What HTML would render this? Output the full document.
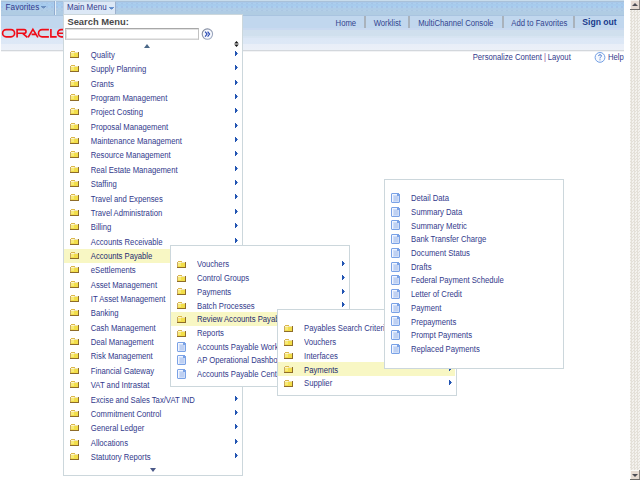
<!DOCTYPE html><html><head><meta charset="utf-8"><style>
*{margin:0;padding:0;box-sizing:border-box}
html,body{width:640px;height:480px;overflow:hidden;background:#fff}
body{position:relative;font-family:"Liberation Sans",sans-serif;font-size:8px;line-height:1}
div,svg{position:absolute}
.t{white-space:nowrap;color:#333a8c;font-size:7.7px;line-height:7.7px;transform:scaleY(1.145);transform-origin:0 0}
.hl{color:#1e2c70}
.mm{font-size:8px}
.fav{font-size:8.2px}
.pipe{color:#8c4c9c}
.hd{color:#32448e}
.so{font-weight:bold;color:#1a3a8c;transform:none;font-size:8.6px}
.ic{display:block}
.ar{width:0;height:0;border-left:3px solid #1f4fae;border-top:2.5px solid transparent;border-bottom:2.5px solid transparent}
.panel{background:#fff;border:1px solid #ccd7dc;overflow:hidden}
.hi{background:#f8f7c4}
</style></head><body>

<div style="left:1px;top:0;width:623px;height:52px;background:linear-gradient(#c8dcec 0,#c8dcec 1px,#a9c1d9 1px,#a9c1d9 2px,#a8c8ea 2px,#a6ccee 6px,#b0cce6 9px,#b0cce2 15px,#a9c4e0 15px,#a9c4e0 16px,#c1d7ee 16px,#c1d7ee 28px,#c8d9f0 28px,#c9d9f0 30px,#d0dfee 30px,#d0e0ee 36px,#d6e3f1 36px,#d7e4f2 38px,#dce7f6 38px,#dde8f6 44px,#e8eef8 44px,#ebf0f8 50px,#d3d7dc 50px,#d3d7dc 51px,#f2f3f5 51px,#f2f3f5 52px)"></div>
<svg style="left:1px;top:0" width="623" height="16" shape-rendering="crispEdges"><defs><pattern id="dp" width="5" height="16" patternUnits="userSpaceOnUse"><rect x="0" y="3" width="2" height="1" fill="#9cb6dc" opacity="0.25"/><rect x="2" y="3" width="3" height="1" fill="#c0dcf4" opacity="0.25"/><rect x="0" y="6" width="2" height="2" fill="#a0b0e4" opacity="0.3"/><rect x="2" y="6" width="3" height="2" fill="#b0d8f8" opacity="0.25"/><rect x="0" y="10" width="2" height="1" fill="#9cb4d8" opacity="0.25"/><rect x="2" y="10" width="3" height="1" fill="#bcd8f0" opacity="0.25"/></pattern></defs><rect width="623" height="16" fill="url(#dp)"/></svg>
<div class="t fav" style="left:5.6px;top:3.15px">Favorites</div>
<svg style="left:41px;top:6px" width="5" height="3" shape-rendering="crispEdges"><rect x="0" y="0" width="5" height="1" fill="#6c90c0"/><rect x="1" y="1" width="3" height="1" fill="#6c90c0"/><rect x="2" y="2" width="1" height="1" fill="#90acd4"/></svg>
<div style="left:54px;top:1px;width:1px;height:14px;background:#90acd0"></div>
<div style="left:55px;top:1px;width:1px;height:14px;background:#e4eef8"></div>
<svg style="left:0;top:0" width="64" height="50" viewBox="0 0 64 50"><g fill="none" stroke="#f00c18" stroke-width="1.65" stroke-linecap="butt"><rect x="2.6" y="29.6" width="12" height="7.2" rx="3.6" ry="3.6"/><path d="M17.1 37.4V29.6H24.2A1.8 1.8 0 0 1 24.2 33.2H17.1M22.4 33.2L27.4 37.4"/><path d="M28.1 37.4L32.9 29.4L37.9 37.4M31.6 34.4H35.9"/><path d="M48.9 29.6H42.1A3.6 3.6 0 0 0 42.1 36.8H48.9"/><path d="M50.9 29V36.8H56.7"/><path d="M65 29.6H61.3A3.6 3.6 0 0 0 61.3 36.8H65M58.2 33.2H65"/></g></svg>
<div class="t hd" style="left:335.6px;top:19.05px">Home</div>
<div class="t hd" style="left:373.7px;top:19.05px">Worklist</div>
<div class="t hd" style="left:418.2px;top:19.05px">MultiChannel Console</div>
<div class="t hd" style="left:511.3px;top:19.05px">Add to Favorites</div>
<div class="t so" style="left:582.3px;top:18.55px">Sign out</div>
<div style="left:364px;top:16px;width:2px;height:12px;background:#a9b2bc"></div>
<div style="left:408px;top:16px;width:2px;height:12px;background:#a9b2bc"></div>
<div style="left:502px;top:16px;width:2px;height:12px;background:#a9b2bc"></div>
<div style="left:573px;top:16px;width:2px;height:12px;background:#a9b2bc"></div>
<div class="t pc" style="left:472.7px;top:53.05px">Personalize Content</div>
<div class="t pipe" style="left:544px;top:53.05px">|</div>
<div class="t pc" style="left:547.7px;top:53.05px">Layout</div>
<svg style="left:594px;top:51px" width="12" height="13" viewBox="0 0 12 13"><circle cx="6" cy="6.4" r="4.9" fill="#f6f9fe" stroke="#6c9ae2" stroke-width="0.95"/><path d="M4.6 5.1Q4.6 3.7 6 3.7Q7.4 3.7 7.4 5Q7.4 5.7 6.5 6.2Q6 6.5 6 7.4" fill="none" stroke="#4a7ad0" stroke-width="0.95"/><rect x="5.5" y="8.3" width="1" height="1" fill="#4a7ad0"/></svg>
<div class="t pc" style="left:608px;top:53.05px">Help</div>
<div style="left:630px;top:0;width:10px;height:480px;background-color:#f2f0ec;background-image:repeating-conic-gradient(#e4e0d8 0 25%, #f4f2ee 0 50%);background-size:3px 3px"></div>
<svg style="left:630px;top:0" width="10" height="10" shape-rendering="crispEdges"><rect width="10" height="10" fill="#e6dad2"/><rect width="10" height="1" fill="#f4f0ec"/><rect width="1" height="10" fill="#f8f6f4"/><rect x="9" width="1" height="10" fill="#8a8480"/><rect y="9" width="10" height="1" fill="#6c6a68"/><path d="M2 6h6L5 3z" fill="#4c4c54" shape-rendering="auto"/></svg>
<svg style="left:630px;top:470px" width="10" height="10" shape-rendering="crispEdges"><rect width="10" height="10" fill="#e6dad2"/><rect width="10" height="1" fill="#fbfaf8"/><rect width="1" height="10" fill="#f8f6f4"/><rect x="9" width="1" height="10" fill="#8a8480"/><rect y="9" width="10" height="1" fill="#6c6a68"/><path d="M2 4h6L5 7z" fill="#4c4c54" shape-rendering="auto"/></svg>
<div style="left:63px;top:1px;width:53px;height:14px;background:#dce8f6;border:1px solid #c0d0e2;border-right-color:#9cb0cc;border-bottom:none"></div>
<div class="t mm" style="left:67px;top:3.15px">Main Menu</div>
<svg style="left:109px;top:7px" width="5" height="3" shape-rendering="crispEdges"><rect x="0" y="0" width="5" height="1" fill="#6a94d0"/><rect x="1" y="1" width="3" height="1" fill="#5c88c8"/><rect x="2" y="2" width="1" height="1" fill="#9ab8e0"/></svg>
<div class="panel" style="left:63px;top:14px;width:180px;height:462px"></div>
<div class="t sm" style="left:67.4px;top:17.2px;font-weight:bold;font-size:9.4px;line-height:9.4px;transform:scaleY(1.06);color:#4a4a4a">Search Menu:</div>
<div style="left:65px;top:28px;width:134px;height:12px;border:1px solid #c2c2c2;border-top-color:#a8a8a8;border-bottom-color:#d2d2d2;background:#fff;box-shadow:inset 1px 1px 0 #e2e2e2, inset 0 -1px 0 #e8e8e8"></div>
<svg style="left:201px;top:28px" width="13" height="13" viewBox="0 0 13 13"><defs><linearGradient id="gr" x1="0" y1="0" x2="1" y2="1"><stop offset="0" stop-color="#7c8498"/><stop offset="1" stop-color="#a8b4cc"/></linearGradient></defs><circle cx="6.4" cy="6.1" r="5.2" fill="#f6f8fd" stroke="url(#gr)" stroke-width="1.1"/><path d="M4.1 3.6L6.1 6.1L4.1 8.6M6.6 3.6L8.6 6.1L6.6 8.6" fill="none" stroke="#2c4cb4" stroke-width="1.15"/></svg>
<div style="left:144px;top:44px;width:0;height:0;border-bottom:4px solid #4a6888;border-left:3.5px solid transparent;border-right:3.5px solid transparent"></div>
<div style="left:150px;top:468px;width:0;height:0;border-top:4px solid #4a5888;border-left:3.2px solid transparent;border-right:3.2px solid transparent"></div>
<svg style="left:233.5px;top:41px" width="5" height="6" viewBox="0 0 5 6"><path d="M2.5 0L4.8 2.4H0.2z M2.5 6L4.8 3.6H0.2z" fill="#181818"/></svg>
<svg class="ic" style="left:70px;top:51px" width="9" height="7" viewBox="0 0 9 7" shape-rendering="crispEdges"><rect x="1" y="0" width="4" height="1" fill="#dcb84c"/><rect x="0" y="1" width="9" height="6" fill="#f2de4a"/><rect x="1" y="1" width="3" height="1" fill="#fff6c8"/><rect x="4" y="1" width="4" height="1" fill="#efe2b0"/><rect x="1" y="2" width="3" height="3" fill="#f8ea78"/><rect x="0" y="1" width="1" height="6" fill="#c9a862"/><rect x="8" y="1" width="1" height="6" fill="#8e6c2a"/><rect x="0" y="6" width="9" height="1" fill="#8e6c2a"/></svg>
<div class="t" style="left:90.8px;top:50.90px">Quality</div>
<svg class="ic" style="left:235px;top:51px" width="3" height="5" shape-rendering="crispEdges"><rect x="0" y="0" width="1" height="5" fill="#2254b2"/><rect x="1" y="1" width="1" height="3" fill="#2254b2"/><rect x="2" y="2" width="1" height="1" fill="#5c86cc"/></svg>
<svg class="ic" style="left:70px;top:65px" width="9" height="7" viewBox="0 0 9 7" shape-rendering="crispEdges"><rect x="1" y="0" width="4" height="1" fill="#dcb84c"/><rect x="0" y="1" width="9" height="6" fill="#f2de4a"/><rect x="1" y="1" width="3" height="1" fill="#fff6c8"/><rect x="4" y="1" width="4" height="1" fill="#efe2b0"/><rect x="1" y="2" width="3" height="3" fill="#f8ea78"/><rect x="0" y="1" width="1" height="6" fill="#c9a862"/><rect x="8" y="1" width="1" height="6" fill="#8e6c2a"/><rect x="0" y="6" width="9" height="1" fill="#8e6c2a"/></svg>
<div class="t" style="left:90.8px;top:65.26px">Supply Planning</div>
<svg class="ic" style="left:235px;top:65px" width="3" height="5" shape-rendering="crispEdges"><rect x="0" y="0" width="1" height="5" fill="#2254b2"/><rect x="1" y="1" width="1" height="3" fill="#2254b2"/><rect x="2" y="2" width="1" height="1" fill="#5c86cc"/></svg>
<svg class="ic" style="left:70px;top:80px" width="9" height="7" viewBox="0 0 9 7" shape-rendering="crispEdges"><rect x="1" y="0" width="4" height="1" fill="#dcb84c"/><rect x="0" y="1" width="9" height="6" fill="#f2de4a"/><rect x="1" y="1" width="3" height="1" fill="#fff6c8"/><rect x="4" y="1" width="4" height="1" fill="#efe2b0"/><rect x="1" y="2" width="3" height="3" fill="#f8ea78"/><rect x="0" y="1" width="1" height="6" fill="#c9a862"/><rect x="8" y="1" width="1" height="6" fill="#8e6c2a"/><rect x="0" y="6" width="9" height="1" fill="#8e6c2a"/></svg>
<div class="t" style="left:90.8px;top:79.62px">Grants</div>
<svg class="ic" style="left:235px;top:80px" width="3" height="5" shape-rendering="crispEdges"><rect x="0" y="0" width="1" height="5" fill="#2254b2"/><rect x="1" y="1" width="1" height="3" fill="#2254b2"/><rect x="2" y="2" width="1" height="1" fill="#5c86cc"/></svg>
<svg class="ic" style="left:70px;top:94px" width="9" height="7" viewBox="0 0 9 7" shape-rendering="crispEdges"><rect x="1" y="0" width="4" height="1" fill="#dcb84c"/><rect x="0" y="1" width="9" height="6" fill="#f2de4a"/><rect x="1" y="1" width="3" height="1" fill="#fff6c8"/><rect x="4" y="1" width="4" height="1" fill="#efe2b0"/><rect x="1" y="2" width="3" height="3" fill="#f8ea78"/><rect x="0" y="1" width="1" height="6" fill="#c9a862"/><rect x="8" y="1" width="1" height="6" fill="#8e6c2a"/><rect x="0" y="6" width="9" height="1" fill="#8e6c2a"/></svg>
<div class="t" style="left:90.8px;top:93.98px">Program Management</div>
<svg class="ic" style="left:235px;top:94px" width="3" height="5" shape-rendering="crispEdges"><rect x="0" y="0" width="1" height="5" fill="#2254b2"/><rect x="1" y="1" width="1" height="3" fill="#2254b2"/><rect x="2" y="2" width="1" height="1" fill="#5c86cc"/></svg>
<svg class="ic" style="left:70px;top:108px" width="9" height="7" viewBox="0 0 9 7" shape-rendering="crispEdges"><rect x="1" y="0" width="4" height="1" fill="#dcb84c"/><rect x="0" y="1" width="9" height="6" fill="#f2de4a"/><rect x="1" y="1" width="3" height="1" fill="#fff6c8"/><rect x="4" y="1" width="4" height="1" fill="#efe2b0"/><rect x="1" y="2" width="3" height="3" fill="#f8ea78"/><rect x="0" y="1" width="1" height="6" fill="#c9a862"/><rect x="8" y="1" width="1" height="6" fill="#8e6c2a"/><rect x="0" y="6" width="9" height="1" fill="#8e6c2a"/></svg>
<div class="t" style="left:90.8px;top:108.34px">Project Costing</div>
<svg class="ic" style="left:235px;top:108px" width="3" height="5" shape-rendering="crispEdges"><rect x="0" y="0" width="1" height="5" fill="#2254b2"/><rect x="1" y="1" width="1" height="3" fill="#2254b2"/><rect x="2" y="2" width="1" height="1" fill="#5c86cc"/></svg>
<svg class="ic" style="left:70px;top:123px" width="9" height="7" viewBox="0 0 9 7" shape-rendering="crispEdges"><rect x="1" y="0" width="4" height="1" fill="#dcb84c"/><rect x="0" y="1" width="9" height="6" fill="#f2de4a"/><rect x="1" y="1" width="3" height="1" fill="#fff6c8"/><rect x="4" y="1" width="4" height="1" fill="#efe2b0"/><rect x="1" y="2" width="3" height="3" fill="#f8ea78"/><rect x="0" y="1" width="1" height="6" fill="#c9a862"/><rect x="8" y="1" width="1" height="6" fill="#8e6c2a"/><rect x="0" y="6" width="9" height="1" fill="#8e6c2a"/></svg>
<div class="t" style="left:90.8px;top:122.70px">Proposal Management</div>
<svg class="ic" style="left:235px;top:123px" width="3" height="5" shape-rendering="crispEdges"><rect x="0" y="0" width="1" height="5" fill="#2254b2"/><rect x="1" y="1" width="1" height="3" fill="#2254b2"/><rect x="2" y="2" width="1" height="1" fill="#5c86cc"/></svg>
<svg class="ic" style="left:70px;top:137px" width="9" height="7" viewBox="0 0 9 7" shape-rendering="crispEdges"><rect x="1" y="0" width="4" height="1" fill="#dcb84c"/><rect x="0" y="1" width="9" height="6" fill="#f2de4a"/><rect x="1" y="1" width="3" height="1" fill="#fff6c8"/><rect x="4" y="1" width="4" height="1" fill="#efe2b0"/><rect x="1" y="2" width="3" height="3" fill="#f8ea78"/><rect x="0" y="1" width="1" height="6" fill="#c9a862"/><rect x="8" y="1" width="1" height="6" fill="#8e6c2a"/><rect x="0" y="6" width="9" height="1" fill="#8e6c2a"/></svg>
<div class="t" style="left:90.8px;top:137.06px">Maintenance Management</div>
<svg class="ic" style="left:235px;top:137px" width="3" height="5" shape-rendering="crispEdges"><rect x="0" y="0" width="1" height="5" fill="#2254b2"/><rect x="1" y="1" width="1" height="3" fill="#2254b2"/><rect x="2" y="2" width="1" height="1" fill="#5c86cc"/></svg>
<svg class="ic" style="left:70px;top:151px" width="9" height="7" viewBox="0 0 9 7" shape-rendering="crispEdges"><rect x="1" y="0" width="4" height="1" fill="#dcb84c"/><rect x="0" y="1" width="9" height="6" fill="#f2de4a"/><rect x="1" y="1" width="3" height="1" fill="#fff6c8"/><rect x="4" y="1" width="4" height="1" fill="#efe2b0"/><rect x="1" y="2" width="3" height="3" fill="#f8ea78"/><rect x="0" y="1" width="1" height="6" fill="#c9a862"/><rect x="8" y="1" width="1" height="6" fill="#8e6c2a"/><rect x="0" y="6" width="9" height="1" fill="#8e6c2a"/></svg>
<div class="t" style="left:90.8px;top:151.42px">Resource Management</div>
<svg class="ic" style="left:235px;top:151px" width="3" height="5" shape-rendering="crispEdges"><rect x="0" y="0" width="1" height="5" fill="#2254b2"/><rect x="1" y="1" width="1" height="3" fill="#2254b2"/><rect x="2" y="2" width="1" height="1" fill="#5c86cc"/></svg>
<svg class="ic" style="left:70px;top:166px" width="9" height="7" viewBox="0 0 9 7" shape-rendering="crispEdges"><rect x="1" y="0" width="4" height="1" fill="#dcb84c"/><rect x="0" y="1" width="9" height="6" fill="#f2de4a"/><rect x="1" y="1" width="3" height="1" fill="#fff6c8"/><rect x="4" y="1" width="4" height="1" fill="#efe2b0"/><rect x="1" y="2" width="3" height="3" fill="#f8ea78"/><rect x="0" y="1" width="1" height="6" fill="#c9a862"/><rect x="8" y="1" width="1" height="6" fill="#8e6c2a"/><rect x="0" y="6" width="9" height="1" fill="#8e6c2a"/></svg>
<div class="t" style="left:90.8px;top:165.78px">Real Estate Management</div>
<svg class="ic" style="left:235px;top:166px" width="3" height="5" shape-rendering="crispEdges"><rect x="0" y="0" width="1" height="5" fill="#2254b2"/><rect x="1" y="1" width="1" height="3" fill="#2254b2"/><rect x="2" y="2" width="1" height="1" fill="#5c86cc"/></svg>
<svg class="ic" style="left:70px;top:180px" width="9" height="7" viewBox="0 0 9 7" shape-rendering="crispEdges"><rect x="1" y="0" width="4" height="1" fill="#dcb84c"/><rect x="0" y="1" width="9" height="6" fill="#f2de4a"/><rect x="1" y="1" width="3" height="1" fill="#fff6c8"/><rect x="4" y="1" width="4" height="1" fill="#efe2b0"/><rect x="1" y="2" width="3" height="3" fill="#f8ea78"/><rect x="0" y="1" width="1" height="6" fill="#c9a862"/><rect x="8" y="1" width="1" height="6" fill="#8e6c2a"/><rect x="0" y="6" width="9" height="1" fill="#8e6c2a"/></svg>
<div class="t" style="left:90.8px;top:180.14px">Staffing</div>
<svg class="ic" style="left:235px;top:180px" width="3" height="5" shape-rendering="crispEdges"><rect x="0" y="0" width="1" height="5" fill="#2254b2"/><rect x="1" y="1" width="1" height="3" fill="#2254b2"/><rect x="2" y="2" width="1" height="1" fill="#5c86cc"/></svg>
<svg class="ic" style="left:70px;top:194px" width="9" height="7" viewBox="0 0 9 7" shape-rendering="crispEdges"><rect x="1" y="0" width="4" height="1" fill="#dcb84c"/><rect x="0" y="1" width="9" height="6" fill="#f2de4a"/><rect x="1" y="1" width="3" height="1" fill="#fff6c8"/><rect x="4" y="1" width="4" height="1" fill="#efe2b0"/><rect x="1" y="2" width="3" height="3" fill="#f8ea78"/><rect x="0" y="1" width="1" height="6" fill="#c9a862"/><rect x="8" y="1" width="1" height="6" fill="#8e6c2a"/><rect x="0" y="6" width="9" height="1" fill="#8e6c2a"/></svg>
<div class="t" style="left:90.8px;top:194.50px">Travel and Expenses</div>
<svg class="ic" style="left:235px;top:194px" width="3" height="5" shape-rendering="crispEdges"><rect x="0" y="0" width="1" height="5" fill="#2254b2"/><rect x="1" y="1" width="1" height="3" fill="#2254b2"/><rect x="2" y="2" width="1" height="1" fill="#5c86cc"/></svg>
<svg class="ic" style="left:70px;top:209px" width="9" height="7" viewBox="0 0 9 7" shape-rendering="crispEdges"><rect x="1" y="0" width="4" height="1" fill="#dcb84c"/><rect x="0" y="1" width="9" height="6" fill="#f2de4a"/><rect x="1" y="1" width="3" height="1" fill="#fff6c8"/><rect x="4" y="1" width="4" height="1" fill="#efe2b0"/><rect x="1" y="2" width="3" height="3" fill="#f8ea78"/><rect x="0" y="1" width="1" height="6" fill="#c9a862"/><rect x="8" y="1" width="1" height="6" fill="#8e6c2a"/><rect x="0" y="6" width="9" height="1" fill="#8e6c2a"/></svg>
<div class="t" style="left:90.8px;top:208.86px">Travel Administration</div>
<svg class="ic" style="left:235px;top:209px" width="3" height="5" shape-rendering="crispEdges"><rect x="0" y="0" width="1" height="5" fill="#2254b2"/><rect x="1" y="1" width="1" height="3" fill="#2254b2"/><rect x="2" y="2" width="1" height="1" fill="#5c86cc"/></svg>
<svg class="ic" style="left:70px;top:223px" width="9" height="7" viewBox="0 0 9 7" shape-rendering="crispEdges"><rect x="1" y="0" width="4" height="1" fill="#dcb84c"/><rect x="0" y="1" width="9" height="6" fill="#f2de4a"/><rect x="1" y="1" width="3" height="1" fill="#fff6c8"/><rect x="4" y="1" width="4" height="1" fill="#efe2b0"/><rect x="1" y="2" width="3" height="3" fill="#f8ea78"/><rect x="0" y="1" width="1" height="6" fill="#c9a862"/><rect x="8" y="1" width="1" height="6" fill="#8e6c2a"/><rect x="0" y="6" width="9" height="1" fill="#8e6c2a"/></svg>
<div class="t" style="left:90.8px;top:223.22px">Billing</div>
<svg class="ic" style="left:235px;top:223px" width="3" height="5" shape-rendering="crispEdges"><rect x="0" y="0" width="1" height="5" fill="#2254b2"/><rect x="1" y="1" width="1" height="3" fill="#2254b2"/><rect x="2" y="2" width="1" height="1" fill="#5c86cc"/></svg>
<svg class="ic" style="left:70px;top:238px" width="9" height="7" viewBox="0 0 9 7" shape-rendering="crispEdges"><rect x="1" y="0" width="4" height="1" fill="#dcb84c"/><rect x="0" y="1" width="9" height="6" fill="#f2de4a"/><rect x="1" y="1" width="3" height="1" fill="#fff6c8"/><rect x="4" y="1" width="4" height="1" fill="#efe2b0"/><rect x="1" y="2" width="3" height="3" fill="#f8ea78"/><rect x="0" y="1" width="1" height="6" fill="#c9a862"/><rect x="8" y="1" width="1" height="6" fill="#8e6c2a"/><rect x="0" y="6" width="9" height="1" fill="#8e6c2a"/></svg>
<div class="t" style="left:90.8px;top:237.58px">Accounts Receivable</div>
<svg class="ic" style="left:235px;top:238px" width="3" height="5" shape-rendering="crispEdges"><rect x="0" y="0" width="1" height="5" fill="#2254b2"/><rect x="1" y="1" width="1" height="3" fill="#2254b2"/><rect x="2" y="2" width="1" height="1" fill="#5c86cc"/></svg>
<div class="hi" style="left:64px;top:249px;width:178px;height:14px"></div>
<svg class="ic" style="left:70px;top:252px" width="9" height="7" viewBox="0 0 9 7" shape-rendering="crispEdges"><rect x="1" y="0" width="4" height="1" fill="#dcb84c"/><rect x="0" y="1" width="9" height="6" fill="#f2de4a"/><rect x="1" y="1" width="3" height="1" fill="#fff6c8"/><rect x="4" y="1" width="4" height="1" fill="#efe2b0"/><rect x="1" y="2" width="3" height="3" fill="#f8ea78"/><rect x="0" y="1" width="1" height="6" fill="#c9a862"/><rect x="8" y="1" width="1" height="6" fill="#8e6c2a"/><rect x="0" y="6" width="9" height="1" fill="#8e6c2a"/></svg>
<div class="t hl" style="left:90.8px;top:251.94px">Accounts Payable</div>
<svg class="ic" style="left:235px;top:252px" width="3" height="5" shape-rendering="crispEdges"><rect x="0" y="0" width="1" height="5" fill="#2254b2"/><rect x="1" y="1" width="1" height="3" fill="#2254b2"/><rect x="2" y="2" width="1" height="1" fill="#5c86cc"/></svg>
<svg class="ic" style="left:70px;top:266px" width="9" height="7" viewBox="0 0 9 7" shape-rendering="crispEdges"><rect x="1" y="0" width="4" height="1" fill="#dcb84c"/><rect x="0" y="1" width="9" height="6" fill="#f2de4a"/><rect x="1" y="1" width="3" height="1" fill="#fff6c8"/><rect x="4" y="1" width="4" height="1" fill="#efe2b0"/><rect x="1" y="2" width="3" height="3" fill="#f8ea78"/><rect x="0" y="1" width="1" height="6" fill="#c9a862"/><rect x="8" y="1" width="1" height="6" fill="#8e6c2a"/><rect x="0" y="6" width="9" height="1" fill="#8e6c2a"/></svg>
<div class="t" style="left:90.8px;top:266.30px">eSettlements</div>
<svg class="ic" style="left:235px;top:266px" width="3" height="5" shape-rendering="crispEdges"><rect x="0" y="0" width="1" height="5" fill="#2254b2"/><rect x="1" y="1" width="1" height="3" fill="#2254b2"/><rect x="2" y="2" width="1" height="1" fill="#5c86cc"/></svg>
<svg class="ic" style="left:70px;top:281px" width="9" height="7" viewBox="0 0 9 7" shape-rendering="crispEdges"><rect x="1" y="0" width="4" height="1" fill="#dcb84c"/><rect x="0" y="1" width="9" height="6" fill="#f2de4a"/><rect x="1" y="1" width="3" height="1" fill="#fff6c8"/><rect x="4" y="1" width="4" height="1" fill="#efe2b0"/><rect x="1" y="2" width="3" height="3" fill="#f8ea78"/><rect x="0" y="1" width="1" height="6" fill="#c9a862"/><rect x="8" y="1" width="1" height="6" fill="#8e6c2a"/><rect x="0" y="6" width="9" height="1" fill="#8e6c2a"/></svg>
<div class="t" style="left:90.8px;top:280.66px">Asset Management</div>
<svg class="ic" style="left:235px;top:281px" width="3" height="5" shape-rendering="crispEdges"><rect x="0" y="0" width="1" height="5" fill="#2254b2"/><rect x="1" y="1" width="1" height="3" fill="#2254b2"/><rect x="2" y="2" width="1" height="1" fill="#5c86cc"/></svg>
<svg class="ic" style="left:70px;top:295px" width="9" height="7" viewBox="0 0 9 7" shape-rendering="crispEdges"><rect x="1" y="0" width="4" height="1" fill="#dcb84c"/><rect x="0" y="1" width="9" height="6" fill="#f2de4a"/><rect x="1" y="1" width="3" height="1" fill="#fff6c8"/><rect x="4" y="1" width="4" height="1" fill="#efe2b0"/><rect x="1" y="2" width="3" height="3" fill="#f8ea78"/><rect x="0" y="1" width="1" height="6" fill="#c9a862"/><rect x="8" y="1" width="1" height="6" fill="#8e6c2a"/><rect x="0" y="6" width="9" height="1" fill="#8e6c2a"/></svg>
<div class="t" style="left:90.8px;top:295.02px">IT Asset Management</div>
<svg class="ic" style="left:235px;top:295px" width="3" height="5" shape-rendering="crispEdges"><rect x="0" y="0" width="1" height="5" fill="#2254b2"/><rect x="1" y="1" width="1" height="3" fill="#2254b2"/><rect x="2" y="2" width="1" height="1" fill="#5c86cc"/></svg>
<svg class="ic" style="left:70px;top:309px" width="9" height="7" viewBox="0 0 9 7" shape-rendering="crispEdges"><rect x="1" y="0" width="4" height="1" fill="#dcb84c"/><rect x="0" y="1" width="9" height="6" fill="#f2de4a"/><rect x="1" y="1" width="3" height="1" fill="#fff6c8"/><rect x="4" y="1" width="4" height="1" fill="#efe2b0"/><rect x="1" y="2" width="3" height="3" fill="#f8ea78"/><rect x="0" y="1" width="1" height="6" fill="#c9a862"/><rect x="8" y="1" width="1" height="6" fill="#8e6c2a"/><rect x="0" y="6" width="9" height="1" fill="#8e6c2a"/></svg>
<div class="t" style="left:90.8px;top:309.38px">Banking</div>
<svg class="ic" style="left:235px;top:309px" width="3" height="5" shape-rendering="crispEdges"><rect x="0" y="0" width="1" height="5" fill="#2254b2"/><rect x="1" y="1" width="1" height="3" fill="#2254b2"/><rect x="2" y="2" width="1" height="1" fill="#5c86cc"/></svg>
<svg class="ic" style="left:70px;top:324px" width="9" height="7" viewBox="0 0 9 7" shape-rendering="crispEdges"><rect x="1" y="0" width="4" height="1" fill="#dcb84c"/><rect x="0" y="1" width="9" height="6" fill="#f2de4a"/><rect x="1" y="1" width="3" height="1" fill="#fff6c8"/><rect x="4" y="1" width="4" height="1" fill="#efe2b0"/><rect x="1" y="2" width="3" height="3" fill="#f8ea78"/><rect x="0" y="1" width="1" height="6" fill="#c9a862"/><rect x="8" y="1" width="1" height="6" fill="#8e6c2a"/><rect x="0" y="6" width="9" height="1" fill="#8e6c2a"/></svg>
<div class="t" style="left:90.8px;top:323.74px">Cash Management</div>
<svg class="ic" style="left:235px;top:324px" width="3" height="5" shape-rendering="crispEdges"><rect x="0" y="0" width="1" height="5" fill="#2254b2"/><rect x="1" y="1" width="1" height="3" fill="#2254b2"/><rect x="2" y="2" width="1" height="1" fill="#5c86cc"/></svg>
<svg class="ic" style="left:70px;top:338px" width="9" height="7" viewBox="0 0 9 7" shape-rendering="crispEdges"><rect x="1" y="0" width="4" height="1" fill="#dcb84c"/><rect x="0" y="1" width="9" height="6" fill="#f2de4a"/><rect x="1" y="1" width="3" height="1" fill="#fff6c8"/><rect x="4" y="1" width="4" height="1" fill="#efe2b0"/><rect x="1" y="2" width="3" height="3" fill="#f8ea78"/><rect x="0" y="1" width="1" height="6" fill="#c9a862"/><rect x="8" y="1" width="1" height="6" fill="#8e6c2a"/><rect x="0" y="6" width="9" height="1" fill="#8e6c2a"/></svg>
<div class="t" style="left:90.8px;top:338.10px">Deal Management</div>
<svg class="ic" style="left:235px;top:338px" width="3" height="5" shape-rendering="crispEdges"><rect x="0" y="0" width="1" height="5" fill="#2254b2"/><rect x="1" y="1" width="1" height="3" fill="#2254b2"/><rect x="2" y="2" width="1" height="1" fill="#5c86cc"/></svg>
<svg class="ic" style="left:70px;top:352px" width="9" height="7" viewBox="0 0 9 7" shape-rendering="crispEdges"><rect x="1" y="0" width="4" height="1" fill="#dcb84c"/><rect x="0" y="1" width="9" height="6" fill="#f2de4a"/><rect x="1" y="1" width="3" height="1" fill="#fff6c8"/><rect x="4" y="1" width="4" height="1" fill="#efe2b0"/><rect x="1" y="2" width="3" height="3" fill="#f8ea78"/><rect x="0" y="1" width="1" height="6" fill="#c9a862"/><rect x="8" y="1" width="1" height="6" fill="#8e6c2a"/><rect x="0" y="6" width="9" height="1" fill="#8e6c2a"/></svg>
<div class="t" style="left:90.8px;top:352.46px">Risk Management</div>
<svg class="ic" style="left:235px;top:352px" width="3" height="5" shape-rendering="crispEdges"><rect x="0" y="0" width="1" height="5" fill="#2254b2"/><rect x="1" y="1" width="1" height="3" fill="#2254b2"/><rect x="2" y="2" width="1" height="1" fill="#5c86cc"/></svg>
<svg class="ic" style="left:70px;top:367px" width="9" height="7" viewBox="0 0 9 7" shape-rendering="crispEdges"><rect x="1" y="0" width="4" height="1" fill="#dcb84c"/><rect x="0" y="1" width="9" height="6" fill="#f2de4a"/><rect x="1" y="1" width="3" height="1" fill="#fff6c8"/><rect x="4" y="1" width="4" height="1" fill="#efe2b0"/><rect x="1" y="2" width="3" height="3" fill="#f8ea78"/><rect x="0" y="1" width="1" height="6" fill="#c9a862"/><rect x="8" y="1" width="1" height="6" fill="#8e6c2a"/><rect x="0" y="6" width="9" height="1" fill="#8e6c2a"/></svg>
<div class="t" style="left:90.8px;top:366.82px">Financial Gateway</div>
<svg class="ic" style="left:235px;top:367px" width="3" height="5" shape-rendering="crispEdges"><rect x="0" y="0" width="1" height="5" fill="#2254b2"/><rect x="1" y="1" width="1" height="3" fill="#2254b2"/><rect x="2" y="2" width="1" height="1" fill="#5c86cc"/></svg>
<svg class="ic" style="left:70px;top:381px" width="9" height="7" viewBox="0 0 9 7" shape-rendering="crispEdges"><rect x="1" y="0" width="4" height="1" fill="#dcb84c"/><rect x="0" y="1" width="9" height="6" fill="#f2de4a"/><rect x="1" y="1" width="3" height="1" fill="#fff6c8"/><rect x="4" y="1" width="4" height="1" fill="#efe2b0"/><rect x="1" y="2" width="3" height="3" fill="#f8ea78"/><rect x="0" y="1" width="1" height="6" fill="#c9a862"/><rect x="8" y="1" width="1" height="6" fill="#8e6c2a"/><rect x="0" y="6" width="9" height="1" fill="#8e6c2a"/></svg>
<div class="t" style="left:90.8px;top:381.18px">VAT and Intrastat</div>
<svg class="ic" style="left:70px;top:396px" width="9" height="7" viewBox="0 0 9 7" shape-rendering="crispEdges"><rect x="1" y="0" width="4" height="1" fill="#dcb84c"/><rect x="0" y="1" width="9" height="6" fill="#f2de4a"/><rect x="1" y="1" width="3" height="1" fill="#fff6c8"/><rect x="4" y="1" width="4" height="1" fill="#efe2b0"/><rect x="1" y="2" width="3" height="3" fill="#f8ea78"/><rect x="0" y="1" width="1" height="6" fill="#c9a862"/><rect x="8" y="1" width="1" height="6" fill="#8e6c2a"/><rect x="0" y="6" width="9" height="1" fill="#8e6c2a"/></svg>
<div class="t" style="left:90.8px;top:395.54px">Excise and Sales Tax/VAT IND</div>
<svg class="ic" style="left:235px;top:396px" width="3" height="5" shape-rendering="crispEdges"><rect x="0" y="0" width="1" height="5" fill="#2254b2"/><rect x="1" y="1" width="1" height="3" fill="#2254b2"/><rect x="2" y="2" width="1" height="1" fill="#5c86cc"/></svg>
<svg class="ic" style="left:70px;top:410px" width="9" height="7" viewBox="0 0 9 7" shape-rendering="crispEdges"><rect x="1" y="0" width="4" height="1" fill="#dcb84c"/><rect x="0" y="1" width="9" height="6" fill="#f2de4a"/><rect x="1" y="1" width="3" height="1" fill="#fff6c8"/><rect x="4" y="1" width="4" height="1" fill="#efe2b0"/><rect x="1" y="2" width="3" height="3" fill="#f8ea78"/><rect x="0" y="1" width="1" height="6" fill="#c9a862"/><rect x="8" y="1" width="1" height="6" fill="#8e6c2a"/><rect x="0" y="6" width="9" height="1" fill="#8e6c2a"/></svg>
<div class="t" style="left:90.8px;top:409.90px">Commitment Control</div>
<svg class="ic" style="left:235px;top:410px" width="3" height="5" shape-rendering="crispEdges"><rect x="0" y="0" width="1" height="5" fill="#2254b2"/><rect x="1" y="1" width="1" height="3" fill="#2254b2"/><rect x="2" y="2" width="1" height="1" fill="#5c86cc"/></svg>
<svg class="ic" style="left:70px;top:424px" width="9" height="7" viewBox="0 0 9 7" shape-rendering="crispEdges"><rect x="1" y="0" width="4" height="1" fill="#dcb84c"/><rect x="0" y="1" width="9" height="6" fill="#f2de4a"/><rect x="1" y="1" width="3" height="1" fill="#fff6c8"/><rect x="4" y="1" width="4" height="1" fill="#efe2b0"/><rect x="1" y="2" width="3" height="3" fill="#f8ea78"/><rect x="0" y="1" width="1" height="6" fill="#c9a862"/><rect x="8" y="1" width="1" height="6" fill="#8e6c2a"/><rect x="0" y="6" width="9" height="1" fill="#8e6c2a"/></svg>
<div class="t" style="left:90.8px;top:424.26px">General Ledger</div>
<svg class="ic" style="left:235px;top:424px" width="3" height="5" shape-rendering="crispEdges"><rect x="0" y="0" width="1" height="5" fill="#2254b2"/><rect x="1" y="1" width="1" height="3" fill="#2254b2"/><rect x="2" y="2" width="1" height="1" fill="#5c86cc"/></svg>
<svg class="ic" style="left:70px;top:439px" width="9" height="7" viewBox="0 0 9 7" shape-rendering="crispEdges"><rect x="1" y="0" width="4" height="1" fill="#dcb84c"/><rect x="0" y="1" width="9" height="6" fill="#f2de4a"/><rect x="1" y="1" width="3" height="1" fill="#fff6c8"/><rect x="4" y="1" width="4" height="1" fill="#efe2b0"/><rect x="1" y="2" width="3" height="3" fill="#f8ea78"/><rect x="0" y="1" width="1" height="6" fill="#c9a862"/><rect x="8" y="1" width="1" height="6" fill="#8e6c2a"/><rect x="0" y="6" width="9" height="1" fill="#8e6c2a"/></svg>
<div class="t" style="left:90.8px;top:438.62px">Allocations</div>
<svg class="ic" style="left:235px;top:439px" width="3" height="5" shape-rendering="crispEdges"><rect x="0" y="0" width="1" height="5" fill="#2254b2"/><rect x="1" y="1" width="1" height="3" fill="#2254b2"/><rect x="2" y="2" width="1" height="1" fill="#5c86cc"/></svg>
<svg class="ic" style="left:70px;top:453px" width="9" height="7" viewBox="0 0 9 7" shape-rendering="crispEdges"><rect x="1" y="0" width="4" height="1" fill="#dcb84c"/><rect x="0" y="1" width="9" height="6" fill="#f2de4a"/><rect x="1" y="1" width="3" height="1" fill="#fff6c8"/><rect x="4" y="1" width="4" height="1" fill="#efe2b0"/><rect x="1" y="2" width="3" height="3" fill="#f8ea78"/><rect x="0" y="1" width="1" height="6" fill="#c9a862"/><rect x="8" y="1" width="1" height="6" fill="#8e6c2a"/><rect x="0" y="6" width="9" height="1" fill="#8e6c2a"/></svg>
<div class="t" style="left:90.8px;top:452.98px">Statutory Reports</div>
<svg class="ic" style="left:235px;top:453px" width="3" height="5" shape-rendering="crispEdges"><rect x="0" y="0" width="1" height="5" fill="#2254b2"/><rect x="1" y="1" width="1" height="3" fill="#2254b2"/><rect x="2" y="2" width="1" height="1" fill="#5c86cc"/></svg>
<div class="panel" style="left:170px;top:245px;width:180px;height:142px"></div>
<svg class="ic" style="left:177px;top:261px" width="9" height="7" viewBox="0 0 9 7" shape-rendering="crispEdges"><rect x="1" y="0" width="4" height="1" fill="#dcb84c"/><rect x="0" y="1" width="9" height="6" fill="#f2de4a"/><rect x="1" y="1" width="3" height="1" fill="#fff6c8"/><rect x="4" y="1" width="4" height="1" fill="#efe2b0"/><rect x="1" y="2" width="3" height="3" fill="#f8ea78"/><rect x="0" y="1" width="1" height="6" fill="#c9a862"/><rect x="8" y="1" width="1" height="6" fill="#8e6c2a"/><rect x="0" y="6" width="9" height="1" fill="#8e6c2a"/></svg>
<div style="left:197px;top:256.90px;width:150px;height:14px;overflow:hidden"><div class="t" style="left:0px;top:3.55px">Vouchers</div></div>
<svg class="ic" style="left:342px;top:261px" width="3" height="5" shape-rendering="crispEdges"><rect x="0" y="0" width="1" height="5" fill="#2254b2"/><rect x="1" y="1" width="1" height="3" fill="#2254b2"/><rect x="2" y="2" width="1" height="1" fill="#5c86cc"/></svg>
<svg class="ic" style="left:177px;top:275px" width="9" height="7" viewBox="0 0 9 7" shape-rendering="crispEdges"><rect x="1" y="0" width="4" height="1" fill="#dcb84c"/><rect x="0" y="1" width="9" height="6" fill="#f2de4a"/><rect x="1" y="1" width="3" height="1" fill="#fff6c8"/><rect x="4" y="1" width="4" height="1" fill="#efe2b0"/><rect x="1" y="2" width="3" height="3" fill="#f8ea78"/><rect x="0" y="1" width="1" height="6" fill="#c9a862"/><rect x="8" y="1" width="1" height="6" fill="#8e6c2a"/><rect x="0" y="6" width="9" height="1" fill="#8e6c2a"/></svg>
<div style="left:197px;top:270.62px;width:150px;height:14px;overflow:hidden"><div class="t" style="left:0px;top:3.55px">Control Groups</div></div>
<svg class="ic" style="left:342px;top:275px" width="3" height="5" shape-rendering="crispEdges"><rect x="0" y="0" width="1" height="5" fill="#2254b2"/><rect x="1" y="1" width="1" height="3" fill="#2254b2"/><rect x="2" y="2" width="1" height="1" fill="#5c86cc"/></svg>
<svg class="ic" style="left:177px;top:288px" width="9" height="7" viewBox="0 0 9 7" shape-rendering="crispEdges"><rect x="1" y="0" width="4" height="1" fill="#dcb84c"/><rect x="0" y="1" width="9" height="6" fill="#f2de4a"/><rect x="1" y="1" width="3" height="1" fill="#fff6c8"/><rect x="4" y="1" width="4" height="1" fill="#efe2b0"/><rect x="1" y="2" width="3" height="3" fill="#f8ea78"/><rect x="0" y="1" width="1" height="6" fill="#c9a862"/><rect x="8" y="1" width="1" height="6" fill="#8e6c2a"/><rect x="0" y="6" width="9" height="1" fill="#8e6c2a"/></svg>
<div style="left:197px;top:284.34px;width:150px;height:14px;overflow:hidden"><div class="t" style="left:0px;top:3.55px">Payments</div></div>
<svg class="ic" style="left:342px;top:289px" width="3" height="5" shape-rendering="crispEdges"><rect x="0" y="0" width="1" height="5" fill="#2254b2"/><rect x="1" y="1" width="1" height="3" fill="#2254b2"/><rect x="2" y="2" width="1" height="1" fill="#5c86cc"/></svg>
<svg class="ic" style="left:177px;top:302px" width="9" height="7" viewBox="0 0 9 7" shape-rendering="crispEdges"><rect x="1" y="0" width="4" height="1" fill="#dcb84c"/><rect x="0" y="1" width="9" height="6" fill="#f2de4a"/><rect x="1" y="1" width="3" height="1" fill="#fff6c8"/><rect x="4" y="1" width="4" height="1" fill="#efe2b0"/><rect x="1" y="2" width="3" height="3" fill="#f8ea78"/><rect x="0" y="1" width="1" height="6" fill="#c9a862"/><rect x="8" y="1" width="1" height="6" fill="#8e6c2a"/><rect x="0" y="6" width="9" height="1" fill="#8e6c2a"/></svg>
<div style="left:197px;top:298.06px;width:150px;height:14px;overflow:hidden"><div class="t" style="left:0px;top:3.55px">Batch Processes</div></div>
<svg class="ic" style="left:342px;top:302px" width="3" height="5" shape-rendering="crispEdges"><rect x="0" y="0" width="1" height="5" fill="#2254b2"/><rect x="1" y="1" width="1" height="3" fill="#2254b2"/><rect x="2" y="2" width="1" height="1" fill="#5c86cc"/></svg>
<div class="hi" style="left:171px;top:312px;width:177px;height:14px"></div>
<svg class="ic" style="left:177px;top:316px" width="9" height="7" viewBox="0 0 9 7" shape-rendering="crispEdges"><rect x="1" y="0" width="4" height="1" fill="#dcb84c"/><rect x="0" y="1" width="9" height="6" fill="#f2de4a"/><rect x="1" y="1" width="3" height="1" fill="#fff6c8"/><rect x="4" y="1" width="4" height="1" fill="#efe2b0"/><rect x="1" y="2" width="3" height="3" fill="#f8ea78"/><rect x="0" y="1" width="1" height="6" fill="#c9a862"/><rect x="8" y="1" width="1" height="6" fill="#8e6c2a"/><rect x="0" y="6" width="9" height="1" fill="#8e6c2a"/></svg>
<div style="left:197px;top:311.78px;width:150px;height:14px;overflow:hidden"><div class="t hl" style="left:0px;top:3.55px">Review Accounts Payable</div></div>
<svg class="ic" style="left:342px;top:316px" width="3" height="5" shape-rendering="crispEdges"><rect x="0" y="0" width="1" height="5" fill="#2254b2"/><rect x="1" y="1" width="1" height="3" fill="#2254b2"/><rect x="2" y="2" width="1" height="1" fill="#5c86cc"/></svg>
<svg class="ic" style="left:177px;top:330px" width="9" height="7" viewBox="0 0 9 7" shape-rendering="crispEdges"><rect x="1" y="0" width="4" height="1" fill="#dcb84c"/><rect x="0" y="1" width="9" height="6" fill="#f2de4a"/><rect x="1" y="1" width="3" height="1" fill="#fff6c8"/><rect x="4" y="1" width="4" height="1" fill="#efe2b0"/><rect x="1" y="2" width="3" height="3" fill="#f8ea78"/><rect x="0" y="1" width="1" height="6" fill="#c9a862"/><rect x="8" y="1" width="1" height="6" fill="#8e6c2a"/><rect x="0" y="6" width="9" height="1" fill="#8e6c2a"/></svg>
<div style="left:197px;top:325.50px;width:150px;height:14px;overflow:hidden"><div class="t" style="left:0px;top:3.55px">Reports</div></div>
<svg class="ic" style="left:342px;top:330px" width="3" height="5" shape-rendering="crispEdges"><rect x="0" y="0" width="1" height="5" fill="#2254b2"/><rect x="1" y="1" width="1" height="3" fill="#2254b2"/><rect x="2" y="2" width="1" height="1" fill="#5c86cc"/></svg>
<svg class="ic" style="left:177px;top:342px" width="9" height="10" viewBox="0 0 9 10" shape-rendering="crispEdges"><rect x="0" y="0" width="9" height="10" fill="#7aa2e6"/><rect x="1" y="1" width="7" height="8" fill="#d0def8"/><rect x="1" y="1" width="1" height="8" fill="#f2f6ff"/><rect x="1" y="1" width="5" height="1" fill="#f2f6ff"/><rect x="3" y="3" width="4" height="5" fill="#bed0f2"/><rect x="6" y="1" width="2" height="2" fill="#7aa2e6"/><rect x="8" y="0" width="1" height="1" fill="#fff"/><rect x="0" y="0" width="1" height="1" fill="#b8cef2"/><rect x="0" y="9" width="1" height="1" fill="#b8cef2"/><rect x="8" y="9" width="1" height="1" fill="#b8cef2"/></svg>
<div style="left:197px;top:339.22px;width:150px;height:14px;overflow:hidden"><div class="t" style="left:0px;top:3.55px">Accounts Payable WorkCenter</div></div>
<svg class="ic" style="left:177px;top:355px" width="9" height="10" viewBox="0 0 9 10" shape-rendering="crispEdges"><rect x="0" y="0" width="9" height="10" fill="#7aa2e6"/><rect x="1" y="1" width="7" height="8" fill="#d0def8"/><rect x="1" y="1" width="1" height="8" fill="#f2f6ff"/><rect x="1" y="1" width="5" height="1" fill="#f2f6ff"/><rect x="3" y="3" width="4" height="5" fill="#bed0f2"/><rect x="6" y="1" width="2" height="2" fill="#7aa2e6"/><rect x="8" y="0" width="1" height="1" fill="#fff"/><rect x="0" y="0" width="1" height="1" fill="#b8cef2"/><rect x="0" y="9" width="1" height="1" fill="#b8cef2"/><rect x="8" y="9" width="1" height="1" fill="#b8cef2"/></svg>
<div style="left:197px;top:352.94px;width:150px;height:14px;overflow:hidden"><div class="t" style="left:0px;top:3.55px">AP Operational Dashboard</div></div>
<svg class="ic" style="left:177px;top:369px" width="9" height="10" viewBox="0 0 9 10" shape-rendering="crispEdges"><rect x="0" y="0" width="9" height="10" fill="#7aa2e6"/><rect x="1" y="1" width="7" height="8" fill="#d0def8"/><rect x="1" y="1" width="1" height="8" fill="#f2f6ff"/><rect x="1" y="1" width="5" height="1" fill="#f2f6ff"/><rect x="3" y="3" width="4" height="5" fill="#bed0f2"/><rect x="6" y="1" width="2" height="2" fill="#7aa2e6"/><rect x="8" y="0" width="1" height="1" fill="#fff"/><rect x="0" y="0" width="1" height="1" fill="#b8cef2"/><rect x="0" y="9" width="1" height="1" fill="#b8cef2"/><rect x="8" y="9" width="1" height="1" fill="#b8cef2"/></svg>
<div style="left:197px;top:366.66px;width:150px;height:14px;overflow:hidden"><div class="t" style="left:0px;top:3.55px">Accounts Payable Center</div></div>
<div class="panel" style="left:277px;top:309px;width:180px;height:87px"></div>
<svg class="ic" style="left:284px;top:325px" width="9" height="7" viewBox="0 0 9 7" shape-rendering="crispEdges"><rect x="1" y="0" width="4" height="1" fill="#dcb84c"/><rect x="0" y="1" width="9" height="6" fill="#f2de4a"/><rect x="1" y="1" width="3" height="1" fill="#fff6c8"/><rect x="4" y="1" width="4" height="1" fill="#efe2b0"/><rect x="1" y="2" width="3" height="3" fill="#f8ea78"/><rect x="0" y="1" width="1" height="6" fill="#c9a862"/><rect x="8" y="1" width="1" height="6" fill="#8e6c2a"/><rect x="0" y="6" width="9" height="1" fill="#8e6c2a"/></svg>
<div style="left:304px;top:320.80px;width:150px;height:14px;overflow:hidden"><div class="t" style="left:0px;top:3.55px">Payables Search Criteria</div></div>
<svg class="ic" style="left:284px;top:339px" width="9" height="7" viewBox="0 0 9 7" shape-rendering="crispEdges"><rect x="1" y="0" width="4" height="1" fill="#dcb84c"/><rect x="0" y="1" width="9" height="6" fill="#f2de4a"/><rect x="1" y="1" width="3" height="1" fill="#fff6c8"/><rect x="4" y="1" width="4" height="1" fill="#efe2b0"/><rect x="1" y="2" width="3" height="3" fill="#f8ea78"/><rect x="0" y="1" width="1" height="6" fill="#c9a862"/><rect x="8" y="1" width="1" height="6" fill="#8e6c2a"/><rect x="0" y="6" width="9" height="1" fill="#8e6c2a"/></svg>
<div style="left:304px;top:334.52px;width:150px;height:14px;overflow:hidden"><div class="t" style="left:0px;top:3.55px">Vouchers</div></div>
<svg class="ic" style="left:284px;top:352px" width="9" height="7" viewBox="0 0 9 7" shape-rendering="crispEdges"><rect x="1" y="0" width="4" height="1" fill="#dcb84c"/><rect x="0" y="1" width="9" height="6" fill="#f2de4a"/><rect x="1" y="1" width="3" height="1" fill="#fff6c8"/><rect x="4" y="1" width="4" height="1" fill="#efe2b0"/><rect x="1" y="2" width="3" height="3" fill="#f8ea78"/><rect x="0" y="1" width="1" height="6" fill="#c9a862"/><rect x="8" y="1" width="1" height="6" fill="#8e6c2a"/><rect x="0" y="6" width="9" height="1" fill="#8e6c2a"/></svg>
<div style="left:304px;top:348.24px;width:150px;height:14px;overflow:hidden"><div class="t" style="left:0px;top:3.55px">Interfaces</div></div>
<div class="hi" style="left:278px;top:362px;width:177px;height:14px"></div>
<svg class="ic" style="left:284px;top:366px" width="9" height="7" viewBox="0 0 9 7" shape-rendering="crispEdges"><rect x="1" y="0" width="4" height="1" fill="#dcb84c"/><rect x="0" y="1" width="9" height="6" fill="#f2de4a"/><rect x="1" y="1" width="3" height="1" fill="#fff6c8"/><rect x="4" y="1" width="4" height="1" fill="#efe2b0"/><rect x="1" y="2" width="3" height="3" fill="#f8ea78"/><rect x="0" y="1" width="1" height="6" fill="#c9a862"/><rect x="8" y="1" width="1" height="6" fill="#8e6c2a"/><rect x="0" y="6" width="9" height="1" fill="#8e6c2a"/></svg>
<div style="left:304px;top:361.96px;width:150px;height:14px;overflow:hidden"><div class="t hl" style="left:0px;top:3.55px">Payments</div></div>
<svg class="ic" style="left:449px;top:366px" width="3" height="5" shape-rendering="crispEdges"><rect x="0" y="0" width="1" height="5" fill="#2254b2"/><rect x="1" y="1" width="1" height="3" fill="#2254b2"/><rect x="2" y="2" width="1" height="1" fill="#5c86cc"/></svg>
<svg class="ic" style="left:284px;top:380px" width="9" height="7" viewBox="0 0 9 7" shape-rendering="crispEdges"><rect x="1" y="0" width="4" height="1" fill="#dcb84c"/><rect x="0" y="1" width="9" height="6" fill="#f2de4a"/><rect x="1" y="1" width="3" height="1" fill="#fff6c8"/><rect x="4" y="1" width="4" height="1" fill="#efe2b0"/><rect x="1" y="2" width="3" height="3" fill="#f8ea78"/><rect x="0" y="1" width="1" height="6" fill="#c9a862"/><rect x="8" y="1" width="1" height="6" fill="#8e6c2a"/><rect x="0" y="6" width="9" height="1" fill="#8e6c2a"/></svg>
<div style="left:304px;top:375.68px;width:150px;height:14px;overflow:hidden"><div class="t" style="left:0px;top:3.55px">Supplier</div></div>
<svg class="ic" style="left:449px;top:380px" width="3" height="5" shape-rendering="crispEdges"><rect x="0" y="0" width="1" height="5" fill="#2254b2"/><rect x="1" y="1" width="1" height="3" fill="#2254b2"/><rect x="2" y="2" width="1" height="1" fill="#5c86cc"/></svg>
<div class="panel" style="left:384px;top:179px;width:180px;height:190px"></div>
<svg class="ic" style="left:391px;top:193px" width="9" height="10" viewBox="0 0 9 10" shape-rendering="crispEdges"><rect x="0" y="0" width="9" height="10" fill="#7aa2e6"/><rect x="1" y="1" width="7" height="8" fill="#d0def8"/><rect x="1" y="1" width="1" height="8" fill="#f2f6ff"/><rect x="1" y="1" width="5" height="1" fill="#f2f6ff"/><rect x="3" y="3" width="4" height="5" fill="#bed0f2"/><rect x="6" y="1" width="2" height="2" fill="#7aa2e6"/><rect x="8" y="0" width="1" height="1" fill="#fff"/><rect x="0" y="0" width="1" height="1" fill="#b8cef2"/><rect x="0" y="9" width="1" height="1" fill="#b8cef2"/><rect x="8" y="9" width="1" height="1" fill="#b8cef2"/></svg>
<div style="left:411px;top:190.60px;width:150px;height:14px;overflow:hidden"><div class="t" style="left:0px;top:3.55px">Detail Data</div></div>
<svg class="ic" style="left:391px;top:207px" width="9" height="10" viewBox="0 0 9 10" shape-rendering="crispEdges"><rect x="0" y="0" width="9" height="10" fill="#7aa2e6"/><rect x="1" y="1" width="7" height="8" fill="#d0def8"/><rect x="1" y="1" width="1" height="8" fill="#f2f6ff"/><rect x="1" y="1" width="5" height="1" fill="#f2f6ff"/><rect x="3" y="3" width="4" height="5" fill="#bed0f2"/><rect x="6" y="1" width="2" height="2" fill="#7aa2e6"/><rect x="8" y="0" width="1" height="1" fill="#fff"/><rect x="0" y="0" width="1" height="1" fill="#b8cef2"/><rect x="0" y="9" width="1" height="1" fill="#b8cef2"/><rect x="8" y="9" width="1" height="1" fill="#b8cef2"/></svg>
<div style="left:411px;top:204.32px;width:150px;height:14px;overflow:hidden"><div class="t" style="left:0px;top:3.55px">Summary Data</div></div>
<svg class="ic" style="left:391px;top:220px" width="9" height="10" viewBox="0 0 9 10" shape-rendering="crispEdges"><rect x="0" y="0" width="9" height="10" fill="#7aa2e6"/><rect x="1" y="1" width="7" height="8" fill="#d0def8"/><rect x="1" y="1" width="1" height="8" fill="#f2f6ff"/><rect x="1" y="1" width="5" height="1" fill="#f2f6ff"/><rect x="3" y="3" width="4" height="5" fill="#bed0f2"/><rect x="6" y="1" width="2" height="2" fill="#7aa2e6"/><rect x="8" y="0" width="1" height="1" fill="#fff"/><rect x="0" y="0" width="1" height="1" fill="#b8cef2"/><rect x="0" y="9" width="1" height="1" fill="#b8cef2"/><rect x="8" y="9" width="1" height="1" fill="#b8cef2"/></svg>
<div style="left:411px;top:218.04px;width:150px;height:14px;overflow:hidden"><div class="t" style="left:0px;top:3.55px">Summary Metric</div></div>
<svg class="ic" style="left:391px;top:234px" width="9" height="10" viewBox="0 0 9 10" shape-rendering="crispEdges"><rect x="0" y="0" width="9" height="10" fill="#7aa2e6"/><rect x="1" y="1" width="7" height="8" fill="#d0def8"/><rect x="1" y="1" width="1" height="8" fill="#f2f6ff"/><rect x="1" y="1" width="5" height="1" fill="#f2f6ff"/><rect x="3" y="3" width="4" height="5" fill="#bed0f2"/><rect x="6" y="1" width="2" height="2" fill="#7aa2e6"/><rect x="8" y="0" width="1" height="1" fill="#fff"/><rect x="0" y="0" width="1" height="1" fill="#b8cef2"/><rect x="0" y="9" width="1" height="1" fill="#b8cef2"/><rect x="8" y="9" width="1" height="1" fill="#b8cef2"/></svg>
<div style="left:411px;top:231.76px;width:150px;height:14px;overflow:hidden"><div class="t" style="left:0px;top:3.55px">Bank Transfer Charge</div></div>
<svg class="ic" style="left:391px;top:248px" width="9" height="10" viewBox="0 0 9 10" shape-rendering="crispEdges"><rect x="0" y="0" width="9" height="10" fill="#7aa2e6"/><rect x="1" y="1" width="7" height="8" fill="#d0def8"/><rect x="1" y="1" width="1" height="8" fill="#f2f6ff"/><rect x="1" y="1" width="5" height="1" fill="#f2f6ff"/><rect x="3" y="3" width="4" height="5" fill="#bed0f2"/><rect x="6" y="1" width="2" height="2" fill="#7aa2e6"/><rect x="8" y="0" width="1" height="1" fill="#fff"/><rect x="0" y="0" width="1" height="1" fill="#b8cef2"/><rect x="0" y="9" width="1" height="1" fill="#b8cef2"/><rect x="8" y="9" width="1" height="1" fill="#b8cef2"/></svg>
<div style="left:411px;top:245.48px;width:150px;height:14px;overflow:hidden"><div class="t" style="left:0px;top:3.55px">Document Status</div></div>
<svg class="ic" style="left:391px;top:262px" width="9" height="10" viewBox="0 0 9 10" shape-rendering="crispEdges"><rect x="0" y="0" width="9" height="10" fill="#7aa2e6"/><rect x="1" y="1" width="7" height="8" fill="#d0def8"/><rect x="1" y="1" width="1" height="8" fill="#f2f6ff"/><rect x="1" y="1" width="5" height="1" fill="#f2f6ff"/><rect x="3" y="3" width="4" height="5" fill="#bed0f2"/><rect x="6" y="1" width="2" height="2" fill="#7aa2e6"/><rect x="8" y="0" width="1" height="1" fill="#fff"/><rect x="0" y="0" width="1" height="1" fill="#b8cef2"/><rect x="0" y="9" width="1" height="1" fill="#b8cef2"/><rect x="8" y="9" width="1" height="1" fill="#b8cef2"/></svg>
<div style="left:411px;top:259.20px;width:150px;height:14px;overflow:hidden"><div class="t" style="left:0px;top:3.55px">Drafts</div></div>
<svg class="ic" style="left:391px;top:275px" width="9" height="10" viewBox="0 0 9 10" shape-rendering="crispEdges"><rect x="0" y="0" width="9" height="10" fill="#7aa2e6"/><rect x="1" y="1" width="7" height="8" fill="#d0def8"/><rect x="1" y="1" width="1" height="8" fill="#f2f6ff"/><rect x="1" y="1" width="5" height="1" fill="#f2f6ff"/><rect x="3" y="3" width="4" height="5" fill="#bed0f2"/><rect x="6" y="1" width="2" height="2" fill="#7aa2e6"/><rect x="8" y="0" width="1" height="1" fill="#fff"/><rect x="0" y="0" width="1" height="1" fill="#b8cef2"/><rect x="0" y="9" width="1" height="1" fill="#b8cef2"/><rect x="8" y="9" width="1" height="1" fill="#b8cef2"/></svg>
<div style="left:411px;top:272.92px;width:150px;height:14px;overflow:hidden"><div class="t" style="left:0px;top:3.55px">Federal Payment Schedule</div></div>
<svg class="ic" style="left:391px;top:289px" width="9" height="10" viewBox="0 0 9 10" shape-rendering="crispEdges"><rect x="0" y="0" width="9" height="10" fill="#7aa2e6"/><rect x="1" y="1" width="7" height="8" fill="#d0def8"/><rect x="1" y="1" width="1" height="8" fill="#f2f6ff"/><rect x="1" y="1" width="5" height="1" fill="#f2f6ff"/><rect x="3" y="3" width="4" height="5" fill="#bed0f2"/><rect x="6" y="1" width="2" height="2" fill="#7aa2e6"/><rect x="8" y="0" width="1" height="1" fill="#fff"/><rect x="0" y="0" width="1" height="1" fill="#b8cef2"/><rect x="0" y="9" width="1" height="1" fill="#b8cef2"/><rect x="8" y="9" width="1" height="1" fill="#b8cef2"/></svg>
<div style="left:411px;top:286.64px;width:150px;height:14px;overflow:hidden"><div class="t" style="left:0px;top:3.55px">Letter of Credit</div></div>
<svg class="ic" style="left:391px;top:303px" width="9" height="10" viewBox="0 0 9 10" shape-rendering="crispEdges"><rect x="0" y="0" width="9" height="10" fill="#7aa2e6"/><rect x="1" y="1" width="7" height="8" fill="#d0def8"/><rect x="1" y="1" width="1" height="8" fill="#f2f6ff"/><rect x="1" y="1" width="5" height="1" fill="#f2f6ff"/><rect x="3" y="3" width="4" height="5" fill="#bed0f2"/><rect x="6" y="1" width="2" height="2" fill="#7aa2e6"/><rect x="8" y="0" width="1" height="1" fill="#fff"/><rect x="0" y="0" width="1" height="1" fill="#b8cef2"/><rect x="0" y="9" width="1" height="1" fill="#b8cef2"/><rect x="8" y="9" width="1" height="1" fill="#b8cef2"/></svg>
<div style="left:411px;top:300.36px;width:150px;height:14px;overflow:hidden"><div class="t" style="left:0px;top:3.55px">Payment</div></div>
<svg class="ic" style="left:391px;top:316px" width="9" height="10" viewBox="0 0 9 10" shape-rendering="crispEdges"><rect x="0" y="0" width="9" height="10" fill="#7aa2e6"/><rect x="1" y="1" width="7" height="8" fill="#d0def8"/><rect x="1" y="1" width="1" height="8" fill="#f2f6ff"/><rect x="1" y="1" width="5" height="1" fill="#f2f6ff"/><rect x="3" y="3" width="4" height="5" fill="#bed0f2"/><rect x="6" y="1" width="2" height="2" fill="#7aa2e6"/><rect x="8" y="0" width="1" height="1" fill="#fff"/><rect x="0" y="0" width="1" height="1" fill="#b8cef2"/><rect x="0" y="9" width="1" height="1" fill="#b8cef2"/><rect x="8" y="9" width="1" height="1" fill="#b8cef2"/></svg>
<div style="left:411px;top:314.08px;width:150px;height:14px;overflow:hidden"><div class="t" style="left:0px;top:3.55px">Prepayments</div></div>
<svg class="ic" style="left:391px;top:330px" width="9" height="10" viewBox="0 0 9 10" shape-rendering="crispEdges"><rect x="0" y="0" width="9" height="10" fill="#7aa2e6"/><rect x="1" y="1" width="7" height="8" fill="#d0def8"/><rect x="1" y="1" width="1" height="8" fill="#f2f6ff"/><rect x="1" y="1" width="5" height="1" fill="#f2f6ff"/><rect x="3" y="3" width="4" height="5" fill="#bed0f2"/><rect x="6" y="1" width="2" height="2" fill="#7aa2e6"/><rect x="8" y="0" width="1" height="1" fill="#fff"/><rect x="0" y="0" width="1" height="1" fill="#b8cef2"/><rect x="0" y="9" width="1" height="1" fill="#b8cef2"/><rect x="8" y="9" width="1" height="1" fill="#b8cef2"/></svg>
<div style="left:411px;top:327.80px;width:150px;height:14px;overflow:hidden"><div class="t" style="left:0px;top:3.55px">Prompt Payments</div></div>
<svg class="ic" style="left:391px;top:344px" width="9" height="10" viewBox="0 0 9 10" shape-rendering="crispEdges"><rect x="0" y="0" width="9" height="10" fill="#7aa2e6"/><rect x="1" y="1" width="7" height="8" fill="#d0def8"/><rect x="1" y="1" width="1" height="8" fill="#f2f6ff"/><rect x="1" y="1" width="5" height="1" fill="#f2f6ff"/><rect x="3" y="3" width="4" height="5" fill="#bed0f2"/><rect x="6" y="1" width="2" height="2" fill="#7aa2e6"/><rect x="8" y="0" width="1" height="1" fill="#fff"/><rect x="0" y="0" width="1" height="1" fill="#b8cef2"/><rect x="0" y="9" width="1" height="1" fill="#b8cef2"/><rect x="8" y="9" width="1" height="1" fill="#b8cef2"/></svg>
<div style="left:411px;top:341.52px;width:150px;height:14px;overflow:hidden"><div class="t" style="left:0px;top:3.55px">Replaced Payments</div></div>
</body></html>
